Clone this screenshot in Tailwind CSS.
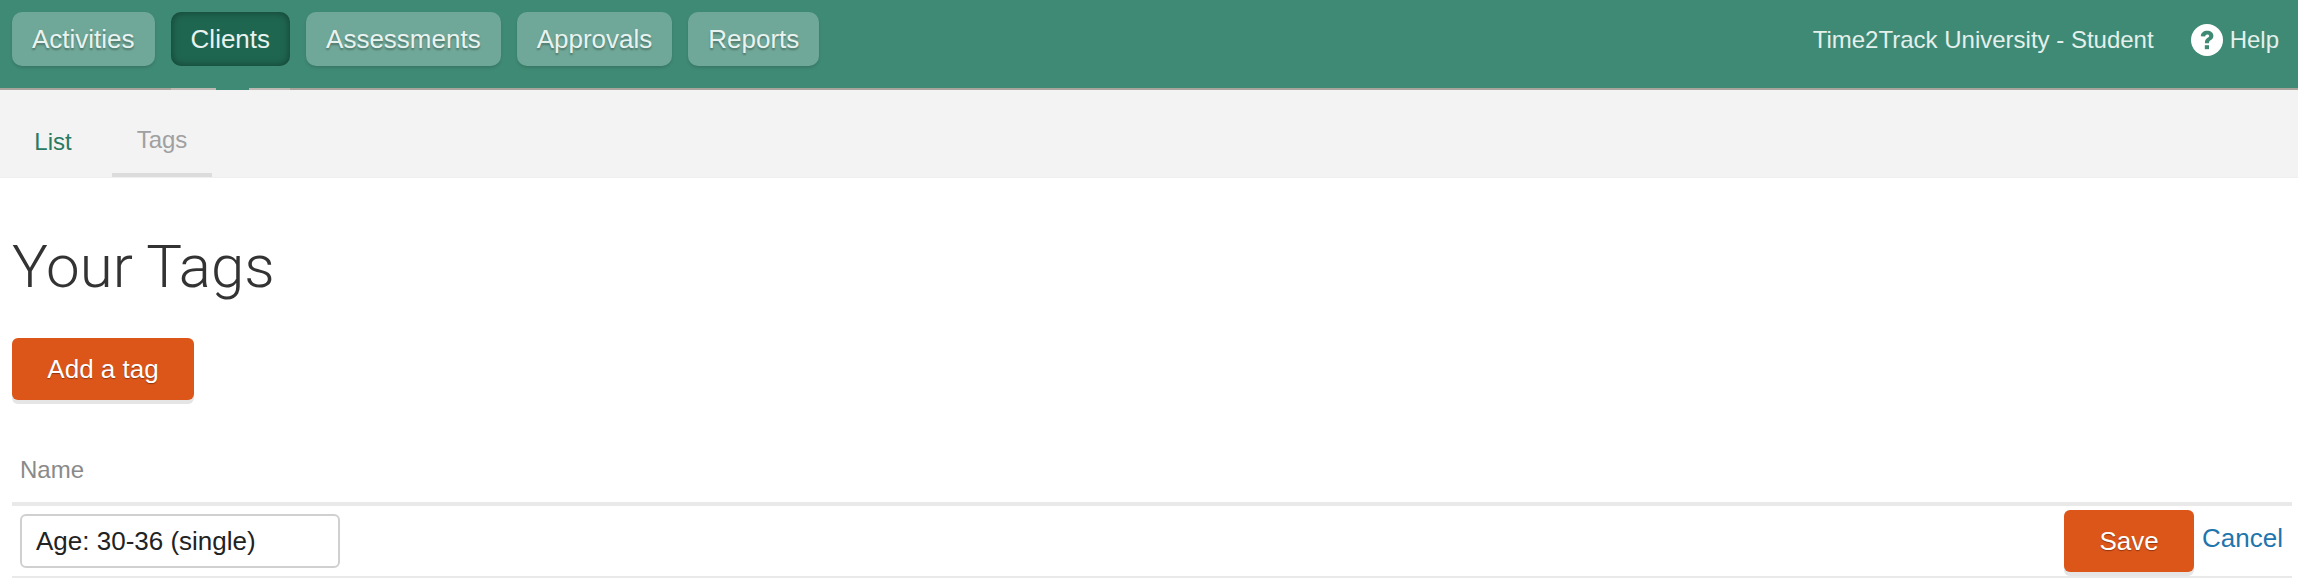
<!DOCTYPE html>
<html>
<head>
<meta charset="utf-8">
<script src="https://cdn.jsdelivr.net/npm/@tailwindcss/browser@4"></script>
</head>
<body class="bg-white font-['Liberation_Sans',Arial,sans-serif] h-[586px] overflow-hidden">
<header class="relative h-[90px] bg-[#3f8a74] border-b-2 border-[#a8a49c] flex items-start justify-between">
  <nav class="flex gap-4 pl-3 pt-3">
    <a class="h-[54px] px-5 flex items-center rounded-[10px] bg-[#6fa898] text-[26px] text-[#e8f3f0] shadow-[0_2px_3px_rgba(0,0,0,0.12)] [text-shadow:0_2px_2px_rgba(0,0,0,0.3)]">Activities</a>
    <a class="relative h-[54px] px-5 flex items-center rounded-[10px] bg-[#1f6650] text-[26px] text-[#e8f3f0] shadow-[inset_0_0_8px_rgba(0,0,0,0.4)]">Clients
      <span class="absolute left-0 right-0 top-[76px] h-[2px] flex">
        <span class="w-[45px] bg-[#bdb9b2]"></span><span class="w-[33px] bg-[#3f8a74]"></span><span class="flex-1 bg-[#bdb9b2]"></span>
      </span>
    </a>
    <a class="h-[54px] px-5 flex items-center rounded-[10px] bg-[#6fa898] text-[26px] text-[#e8f3f0] shadow-[0_2px_3px_rgba(0,0,0,0.12)] [text-shadow:0_2px_2px_rgba(0,0,0,0.3)]">Assessments</a>
    <a class="h-[54px] px-5 flex items-center rounded-[10px] bg-[#6fa898] text-[26px] text-[#e8f3f0] shadow-[0_2px_3px_rgba(0,0,0,0.12)] [text-shadow:0_2px_2px_rgba(0,0,0,0.3)]">Approvals</a>
    <a class="h-[54px] px-5 flex items-center rounded-[10px] bg-[#6fa898] text-[26px] text-[#e8f3f0] shadow-[0_2px_3px_rgba(0,0,0,0.12)] [text-shadow:0_2px_2px_rgba(0,0,0,0.3)]">Reports</a>
  </nav>
  <div class="flex items-center h-[80px] pr-[19px] text-[24px] text-[#e3f0ec]">
    <span class="mr-[37px]">Time2Track University - Student</span>
    <svg class="w-8 h-8 mr-[7px]" viewBox="0 0 32 32"><circle cx="16" cy="16" r="16" fill="#fff"/><path d="M9.800 12.200c.2-3.400 2.800-5.400 6.400-5.400 3.500 0 6.200 2 6.200 5 0 2.200-1.200 3.400-2.800 4.500-1.300.9-1.600 1.400-1.600 2.900h-4.100c0-2.700.7-3.900 2.400-5.100 1.200-.8 1.900-1.300 1.900-2.100 0-1-.8-1.600-1.900-1.600-1.200 0-2 .8-2.200 2.200z" fill="#3f8a74"/><rect x="13.800" y="21.200" width="4.200" height="4" fill="#3f8a74"/></svg>
    <span>Help</span>
  </div>
</header>
<div class="h-[88px] bg-[#f3f3f3] flex items-stretch border-b border-[#efefef]">
  <a class="w-[106px] flex items-center justify-center pt-[16px] text-[24px] text-[#2a7a62]">List</a>
  <a class="ml-[6px] w-[100px] flex items-center justify-center pt-[16px] text-[24px] text-[#a0a0a0] border-b-4 border-[#dcdcdc]">Tags</a>
</div>
<main class="pl-3 pr-[6px]">
  <h1 class="mt-[51px] h-[76px] leading-[76px] text-[60px] font-light text-[#333] font-['Roboto','Liberation_Sans',sans-serif]">Your Tags</h1>
  <button class="mt-[33px] block w-[182px] h-[62px] rounded-md bg-[#dc5519] text-white text-[26px] shadow-[0_4px_0_#e5e5e5] [text-shadow:0_1px_1px_rgba(0,0,0,0.35)]">Add a tag</button>
  <div class="mt-[53px] h-[53px] pl-2 text-[24px] leading-[34px] text-[#8a8a8a] border-b-4 border-[#e9e9e9]">Name</div>
  <div class="h-[72px] flex items-start justify-between pl-2 pr-[9px] border-b-2 border-[#e9e9e9]">
    <input class="mt-2 w-[320px] h-[54px] px-[14px] rounded-md border-2 border-[#d0d0d0] bg-white text-[26px] text-[#222] outline-none" value="Age: 30-36 (single)">
    <div class="flex items-start">
      <button class="mt-1 w-[130px] h-[62px] rounded-md bg-[#dc5519] text-white text-[26px] shadow-[0_4px_0_#e5e5e5] [text-shadow:0_1px_1px_rgba(0,0,0,0.35)]">Save</button>
      <a class="ml-2 mt-[14px] text-[26px] leading-[36px] text-[#1f75ad]">Cancel</a>
    </div>
  </div>
</main>
</body>
</html>
